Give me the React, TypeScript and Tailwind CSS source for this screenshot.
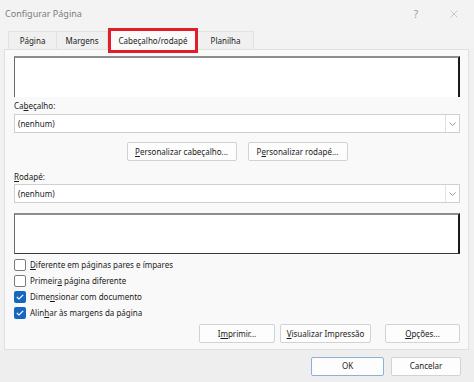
import { X } from "lucide-react";

function Chevron() {
  return (
    <svg width="7" height="4" viewBox="0 0 7 4" fill="none">
      <path d="M0.5 0.5 L3.5 3.5 L6.5 0.5" stroke="#8a8a8a" strokeWidth="0.9" />
    </svg>
  );
}

function Select({ value }: { value: string }) {
  return (
    <div className="h-[19px] flex bg-white border border-[#cfcfcf]">
      <div className="flex-1 flex items-center pl-[3px]">{value}</div>
      <div className="w-[14px] flex items-center justify-center border-l border-[#e2e2e2]">
        <Chevron />
      </div>
    </div>
  );
}

function Btn({ w, children, primary }: { w: string; children: React.ReactNode; primary?: boolean }) {
  return (
    <button
      className={`${w} h-[19px] flex items-center justify-center bg-[#fdfdfd] rounded-[2px] border ${
        primary ? "border-[#8fb0d6]" : "border-[#d2d2d2]"
      }`}
    >
      {children}
    </button>
  );
}

function Check({ checked, children }: { checked?: boolean; children: React.ReactNode }) {
  return (
    <div className="h-[16px] flex items-center gap-[4px]">
      {checked ? (
        <div className="w-[12px] h-[12px] rounded-[2px] bg-[#1766c2] flex items-center justify-center">
          <svg width="8" height="6" viewBox="0 0 8 6" fill="none">
            <path d="M0.8 3 L3 5 L7.2 0.8" stroke="white" strokeWidth="1.2" />
          </svg>
        </div>
      ) : (
        <div className="w-[12px] h-[12px] rounded-[2px] bg-white border border-[#7b7b7b]" />
      )}
      <span>{children}</span>
    </div>
  );
}

export default function App() {
  return (
    <div className="w-[474px] h-[382px] bg-[#f1f1f1] flex flex-col overflow-hidden font-['Noto_Sans',sans-serif] text-[8px] leading-[12px] text-[#1b1b1b]">
      {/* barra de título */}
      <div className="h-[27px] shrink-0 flex items-center justify-between pl-[5px] pr-[14px] bg-[#f3f3f3]">
        <span className="text-[9px] text-[#7c7c7c]">Configurar Página</span>
        <div className="flex items-center gap-[30px] text-[#9a9a9a]">
          <span className="text-[10px]">?</span>
          <X size={12} strokeWidth={1} />
        </div>
      </div>

      {/* abas */}
      <div className="h-[22px] shrink-0 flex items-end pl-[8px] relative z-10 bg-[#f3f3f3]">
        <div className="w-[49px] h-[18px] flex items-center justify-center bg-[#f0f0f0] border border-[#e2e2e2] border-b-0">Página</div>
        <div className="w-[51px] h-[18px] flex items-center justify-center bg-[#f0f0f0] border border-[#e2e2e2] border-b-0 border-l-0">Margens</div>
        <div className="w-[90px] h-[25px] -mb-[4px] flex items-center justify-center bg-[#fafafa] border-[3px] border-[#e11d2a]">Cabeçalho/rodapé</div>
        <div className="w-[56px] h-[18px] flex items-center justify-center bg-[#f0f0f0] border border-[#e2e2e2] border-b-0 border-l-0">Planilha</div>
      </div>

      {/* painel */}
      <div className="ml-[4px] mr-[5px] h-[301px] shrink-0 bg-[#f9f9f9] border border-[#e0e0e0] pl-[9px] pr-[8px] pt-[6px] flex flex-col">
        <div className="h-[41px] bg-white border-t-2 border-t-[#8d8d8d] border-l border-l-[#6b6b6b] border-r-2 border-r-[#1a1a1a]" />
        <div className="mt-[3px]">
          Ca<u className="underline-offset-1">b</u>eçalho:
        </div>
        <div className="mt-[2px]">
          <Select value="(nenhum)" />
        </div>
        <div className="mt-[9px] flex justify-center gap-[11px]">
          <Btn w="w-[110px]">
            <span><u className="underline-offset-1">P</u>ersonalizar cabeçalho...</span>
          </Btn>
          <Btn w="w-[100px]">
            <span>P<u className="underline-offset-1">e</u>rsonalizar rodapé...</span>
          </Btn>
        </div>
        <div className="mt-[10px]">
          <u className="underline-offset-1">R</u>odapé:
        </div>
        <div className="mt-[1px]">
          <Select value="(nenhum)" />
        </div>
        <div className="mt-[10px] h-[41px] bg-white border-t-2 border-t-[#8d8d8d] border-l border-l-[#6b6b6b] border-r-2 border-r-[#1a1a1a] border-b border-b-[#3a3a3a]" />
        <div className="mt-[3px] flex flex-col">
          <Check>
            <u className="underline-offset-1">D</u>iferente em páginas pares e ímpares
          </Check>
          <Check>
            Primeir<u className="underline-offset-1">a</u> página diferente
          </Check>
          <Check checked>
            Dime<u className="underline-offset-1">n</u>sionar com documento
          </Check>
          <Check checked>
            Alin<u className="underline-offset-1">h</u>ar às margens da página
          </Check>
        </div>
        <div className="mt-[3px] flex justify-end">
          <Btn w="w-[76px]">
            <span>I<u className="underline-offset-1">m</u>primir...</span>
          </Btn>
          <div className="ml-[5px]">
            <Btn w="w-[91px]">
              <span><u className="underline-offset-1">V</u>isualizar Impressão</span>
            </Btn>
          </div>
          <div className="ml-[14px]">
            <Btn w="w-[75px]">
              <span><u className="underline-offset-1">O</u>pções...</span>
            </Btn>
          </div>
        </div>
      </div>

      {/* rodapé do diálogo */}
      <div className="flex-1 flex items-center justify-end gap-[7px] pr-[13px] bg-[#eeeeee]">
        <Btn w="w-[73px]" primary>
          OK
        </Btn>
        <Btn w="w-[70px]">Cancelar</Btn>
      </div>
    </div>
  );
}
